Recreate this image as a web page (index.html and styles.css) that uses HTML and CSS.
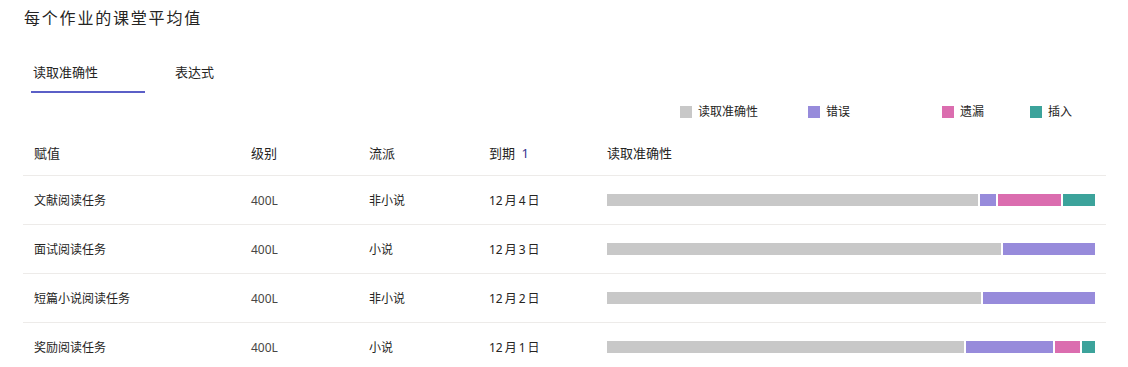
FILE: index.html
```html
<!DOCTYPE html>
<html>
<head>
  <link rel="stylesheet" href="styles.css">
</head>
<body>
  <div class="report">
    <h1 class="title">每个作业的课堂平均值</h1>

    <div class="tabs">
      <div class="tab active">读取准确性</div>
      <div class="tab">表达式</div>
    </div>

    <div class="legend">
      <div class="legend-item"><span class="swatch accuracy"></span>读取准确性</div>
      <div class="legend-item"><span class="swatch error"></span>错误</div>
      <div class="legend-item"><span class="swatch omit"></span>遗漏</div>
      <div class="legend-item"><span class="swatch insert"></span>插入</div>
    </div>

    <div class="table">
      <div class="row head">
        <div>赋值</div>
        <div>级别</div>
        <div>流派</div>
        <div>到期 <span class="sort">1</span></div>
        <div>读取准确性</div>
      </div>

      <div class="row">
        <div>文献阅读任务</div>
        <div class="level">400L</div>
        <div>非小说</div>
        <div>12&thinsp;月&thinsp;4&thinsp;日</div>
        <div class="bar">
          <span class="seg accuracy" style="width: 371px"></span>
          <span class="seg error" style="width: 16px"></span>
          <span class="seg omit" style="width: 63px"></span>
          <span class="seg insert" style="width: 32px"></span>
        </div>
      </div>

      <div class="row">
        <div>面试阅读任务</div>
        <div class="level">400L</div>
        <div>小说</div>
        <div>12&thinsp;月&thinsp;3&thinsp;日</div>
        <div class="bar">
          <span class="seg accuracy" style="width: 394px"></span>
          <span class="seg error" style="width: 92px"></span>
        </div>
      </div>

      <div class="row">
        <div>短篇小说阅读任务</div>
        <div class="level">400L</div>
        <div>非小说</div>
        <div>12&thinsp;月&thinsp;2&thinsp;日</div>
        <div class="bar">
          <span class="seg accuracy" style="width: 374px"></span>
          <span class="seg error" style="width: 112px"></span>
        </div>
      </div>

      <div class="row">
        <div>奖励阅读任务</div>
        <div class="level">400L</div>
        <div>小说</div>
        <div>12&thinsp;月&thinsp;1&thinsp;日</div>
        <div class="bar">
          <span class="seg accuracy" style="width: 357px"></span>
          <span class="seg error" style="width: 87px"></span>
          <span class="seg omit" style="width: 25px"></span>
          <span class="seg insert" style="width: 13px"></span>
        </div>
      </div>
    </div>
  </div>
</body>
</html>
```

FILE: styles.css
```css
body {
  margin: 0;
  background: white;
  color: #252423;
  font-family: "Noto Sans", "Noto Sans CJK SC", sans-serif;
}

.report {
  padding-left: 24px;
  width: 1082px;
}

.title {
  margin: 0;
  padding-top: 8px;
  font-size: 16px;
  font-weight: normal;
  line-height: 20px;
  letter-spacing: 1.8px;
}

.tabs {
  display: flex;
  margin: 34px 0 0 7px;
}

.tab {
  font-size: 13px;
  line-height: 20px;
  padding: 0 0 9px 2px;
  border-bottom: 2px solid transparent;
}

.tab.active {
  width: 112px;
  border-bottom-color: #5b5fc7;
  margin-right: 28px;
}

.legend {
  display: grid;
  grid-template-columns: 128px 134px 88px auto;
  margin: 11px 0 0 656px;
  font-size: 12px;
  line-height: 16px;
}

.legend-item {
  display: flex;
  align-items: center;
}

.swatch {
  width: 12px;
  height: 12px;
  margin-right: 6px;
}

.accuracy { background: #c8c8c8; }
.error { background: #978bdb; }
.omit { background: #db6daf; }
.insert { background: #3ca39b; }

.table {
  margin-left: -1px;
  margin-top: 23px;
}

.row {
  display: grid;
  grid-template-columns: 217px 118px 120px 118px 488px;
  align-items: center;
  padding: 0 11px;
  height: 48px;
  border-bottom: 1px solid #edebe9;
  font-size: 12px;
}

.row.head {
  height: 32px;
  align-items: start;
  font-size: 13px;
  line-height: 20px;
}

.sort {
  color: #33358f;
  margin-left: 3px;
}

.level {
  color: #484644;
}

.bar {
  display: flex;
  gap: 2px;
  height: 12px;
}

.seg {
  display: block;
  height: 12px;
}
```
